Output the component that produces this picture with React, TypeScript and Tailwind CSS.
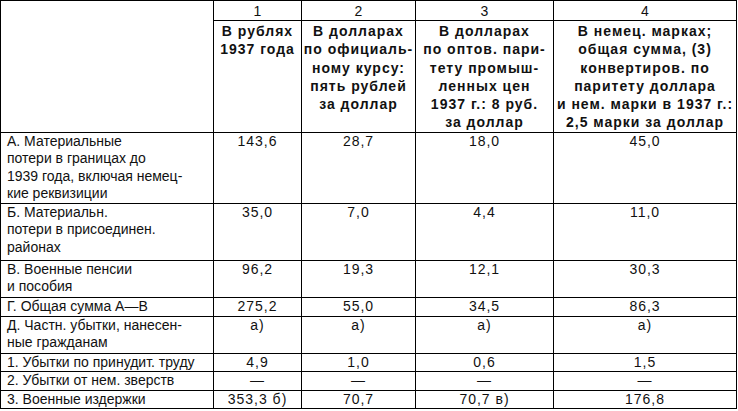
import React from "react";

const rows: { label: string[]; vals: string[]; h: string }[] = [
  {
    label: ["А. Материальные", "потери в границах до", "1939 года, включая немец-", "кие реквизиции"],
    vals: ["143,6", "28,7", "18,0", "45,0"],
    h: "h-[70px]",
  },
  {
    label: ["Б. Материальн.", "потери в присоединен.", "районах"],
    vals: ["35,0", "7,0", "4,4", "11,0"],
    h: "h-[57px]",
  },
  {
    label: ["В. Военные пенсии", "и пособия"],
    vals: ["96,2", "19,3", "12,1", "30,3"],
    h: "h-[37px]",
  },
  { label: ["Г. Общая сумма А—В"], vals: ["275,2", "55,0", "34,5", "86,3"], h: "h-[19px]" },
  {
    label: ["Д. Частн. убытки, нанесен-", "ные гражданам"],
    vals: ["а)", "а)", "а)", "а)"],
    h: "h-[37px]",
  },
  { label: ["1. Убытки по принудит. труду"], vals: ["4,9", "1,0", "0,6", "1,5"], h: "h-[18px]" },
  { label: ["2. Убытки от нем. зверств"], vals: ["—", "—", "—", "—"], h: "h-[18px]" },
  { label: ["3. Военные издержки"], vals: ["353,3 б)", "70,7", "70,7 в)", "176,8"], h: "h-[18px]" },
];

const heads: string[][] = [
  ["В рублях", "1937 года"],
  ["В долларах", "по официаль-", "ному курсу:", "пять рублей", "за доллар"],
  ["В долларах", "по оптов. пари-", "тету промыш-", "ленных цен", "1937 г.: 8 руб.", "за доллар"],
  ["В немец. марках;", "общая сумма, (3)", "конвертиров. по", "паритету доллара", "и нем. марки в 1937 г.:", "2,5 марки за доллар"],
];

export default function App() {
  return (
    <div className="w-[738px] h-[411px] bg-white text-[#111] font-['Liberation_Sans',Arial,sans-serif] text-[14px]">
      <table className="w-[736px] table-fixed border-collapse">
        <colgroup>
          <col className="w-[213px]" />
          <col className="w-[88px]" />
          <col className="w-[114px]" />
          <col className="w-[138px]" />
          <col className="w-[183px]" />
        </colgroup>
        <thead>
          <tr className="h-[20px]">
            <th rowSpan={2} className="border border-black p-0"></th>
            {["1", "2", "3", "4"].map((n) => (
              <th key={n} className="border border-black p-0 font-normal text-center leading-[18px] align-middle">
                {n}
              </th>
            ))}
          </tr>
          <tr className="h-[111px]">
            {heads.map((lines, i) => (
              <th key={i} className="border border-black px-0 pt-[1px] pb-0 align-top text-center font-bold leading-[18.3px] tracking-[1px]">
                {lines.map((l, j) => (
                  <div key={j} className="whitespace-nowrap">{l}</div>
                ))}
              </th>
            ))}
          </tr>
        </thead>
        <tbody>
          {rows.map((r, i) => (
            <tr key={i} className={r.h}>
              <td className="border border-black pl-[6px] pr-0 py-0 align-top leading-[17.5px]">
                {r.label.map((l, j) => (
                  <div key={j} className="whitespace-nowrap">{l}</div>
                ))}
              </td>
              {r.vals.map((v, j) => (
                <td key={j} className="border border-black p-0 align-top text-center leading-[17.5px] tracking-[1px]">
                  {v}
                </td>
              ))}
            </tr>
          ))}
        </tbody>
      </table>
    </div>
  );
}
